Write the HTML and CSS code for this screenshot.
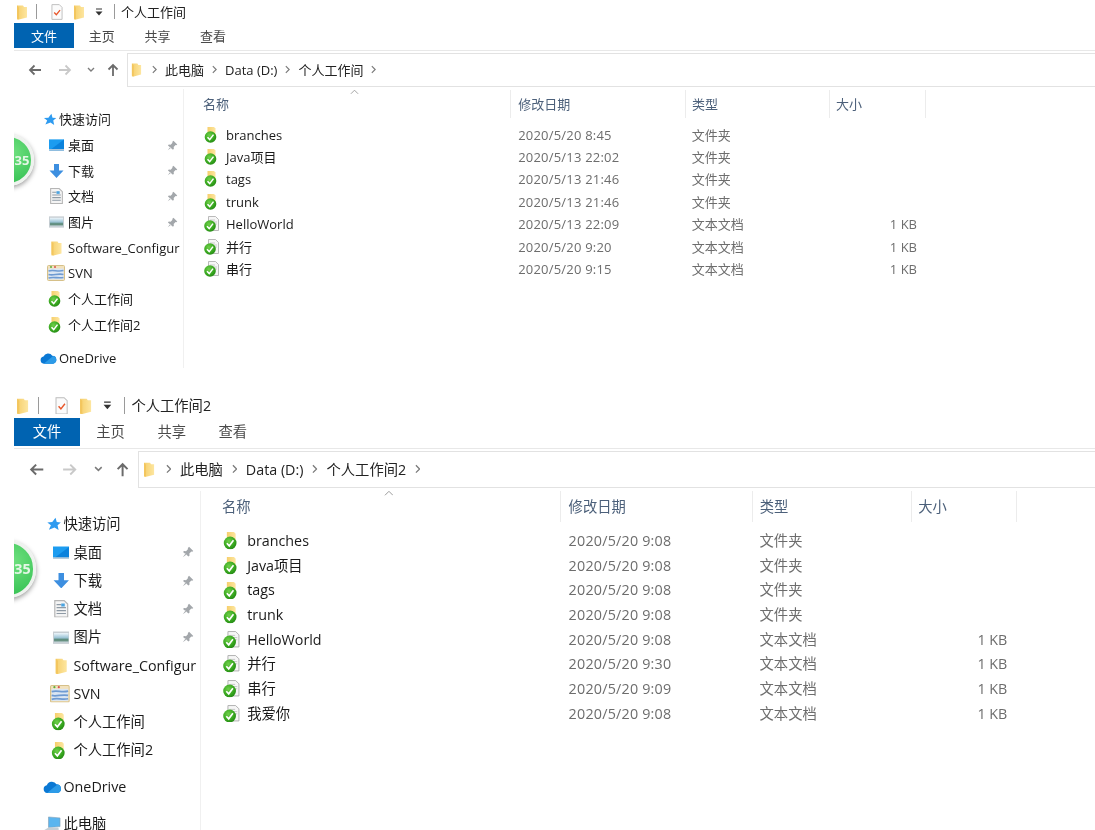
FILE: index.html
```html
<!DOCTYPE html>
<html lang="zh-CN">
<head>
<meta charset="utf-8">
<title>个人工作间</title>
<link rel="stylesheet" href="styles.css">
</head>
<body>
<svg class="defs" aria-hidden="true">
  <defs>
    <linearGradient id="gFolder" x1="0" y1="0" x2="1" y2="0"><stop offset="0" stop-color="#f6cf6c"/><stop offset="1" stop-color="#fde6a0"/></linearGradient>
    <radialGradient id="gCheck" cx=".4" cy=".35" r=".8"><stop offset="0" stop-color="#6fd04a"/><stop offset=".6" stop-color="#34a31c"/><stop offset="1" stop-color="#1d7a12"/></radialGradient>
    <linearGradient id="gSky" x1="0" y1="0" x2="0" y2="1"><stop offset="0" stop-color="#eef6fb"/><stop offset=".5" stop-color="#9cc4d6"/><stop offset=".75" stop-color="#4d7f68"/><stop offset="1" stop-color="#c8d6dd"/></linearGradient>
    <symbol id="folder" viewBox="0 0 12 16"><path d="M1 1.500h6l1 1.500h3v10.500L3 15.500H1z" fill="url(#gFolder)"/><path d="M3 3.500v12L1 14.500V1.500z" fill="#f3c65e"/></symbol>
    <symbol id="taskdoc" viewBox="0 0 13 17"><path d="M1 .5h8l3 3v13H1z" fill="#fbfbfb" stroke="#bdbdbd"/><path d="M3.500 9l2.300 2.500 4-5" fill="none" stroke="#e8562a" stroke-width="1.400"/></symbol>
    <symbol id="file-folder" viewBox="0 0 16 16"><path d="M3.500 0h6.500l1.500 1.500v11h-8z" fill="url(#gFolder)"/><circle cx="6.500" cy="10" r="5.800" fill="url(#gCheck)"/><path d="M3.500 10.200l2.200 2.400 3.800-5" fill="none" stroke="#fff" stroke-width="1.500"/></symbol>
    <symbol id="file-doc" viewBox="0 0 16 16"><path d="M4.500.5h7l3 3v11h-10z" fill="#f6f6f6" stroke="#a9a9a9" stroke-width=".8"/><path d="M6 4h5M7 6h6M11 8h2" stroke="#c2c2c2" stroke-width=".8"/><circle cx="6" cy="10" r="5.800" fill="url(#gCheck)"/><path d="M3 10.200l2.200 2.400 3.800-5" fill="none" stroke="#fff" stroke-width="1.500"/></symbol>
    <symbol id="star" viewBox="0 0 14 14"><path d="M8.500.8l1.200 4.200 4 .3-3.200 2.800 1 4.700-4-2.500L2 12.500l2-4.500L.5 5.300l4.800-.3z" fill="#2e9bf0"/></symbol>
    <symbol id="desktop" viewBox="0 0 16 12"><rect x="0" y="0" width="16" height="12" fill="#1c9cf0"/><path d="M0 12L16 0v12z" fill="#0b82dc"/><rect y="10.500" width="16" height="1.500" fill="#d0d7dd"/></symbol>
    <symbol id="download" viewBox="0 0 14 14"><path d="M4.500 0h5v6.500H14L7 14 0 6.500h4.500z" fill="#3d8fe0"/></symbol>
    <symbol id="doc" viewBox="0 0 12 15"><path d="M.5.500h8l3 3v11H.5z" fill="#f4f4f4" stroke="#b5b5b5"/><path d="M2 4h4M2 6.500h8M2 9h8M2 11.500h8" stroke="#8e9aa5"/><path d="M6 3h3v2.500H6z" fill="#4aa3e0"/></symbol>
    <symbol id="picture" viewBox="0 0 16 12"><rect width="16" height="12" fill="#c7ced3"/><rect x="1" y="1.500" width="14" height="9" fill="url(#gSky)"/></symbol>
    <symbol id="repo" viewBox="0 0 18 16"><rect x=".5" y=".5" width="17" height="15" rx="1" fill="#f2e2bd" stroke="#d6c089"/><rect x="1.500" y="3.500" width="15" height="11" fill="#dbe6f3"/><path d="M1.500 6c5-1.500 9 1 15-.5M1.500 9.500c5 1.500 9-1.500 15 0M1.500 13c5-1.500 9 .5 15-.5" fill="none" stroke="#6f9bd2" stroke-width="1.600"/><circle cx="4" cy="2" r="1" fill="#5cae3f"/><circle cx="8" cy="2" r="1" fill="#d9534f"/></symbol>
    <symbol id="cloud" viewBox="0 0 18 12"><path d="M4 12a3.800 3.800 0 0 1-.3-7.500A5.200 5.200 0 0 1 13 3.700a4.200 4.200 0 0 1 1 8.300z" fill="#0a78d4"/><path d="M4 12l6-5 4-3.200a4.200 4.200 0 0 1 0 8.200z" fill="#2c9be8"/></symbol>
    <symbol id="pc" viewBox="0 0 18 16"><path d="M5 1l12 1v9l-12 1z" fill="#5bb5ef" stroke="#7f9db3" stroke-width=".6"/><path d="M0 15l5-3h10l1 2-6 2H2z" fill="#c5ced5"/></symbol>
    <symbol id="pin" viewBox="0 0 12 12"><path d="M7 .8l4.200 4.200-1 .8-.9-.3-2 2 .2 2-1 1L1 5.900l1-1 2 .2 2-2-.3-.9zM3.500 7.500L.8 11.200l3.700-2.700z" fill="#a3a7ab"/></symbol>
    <symbol id="arrow-left" viewBox="0 0 14 12"><path d="M13 6H2M6.500 1.500L2 6l4.500 4.500" fill="none" stroke="currentColor" stroke-width="1.800"/></symbol>
    <symbol id="arrow-right" viewBox="0 0 14 12"><path d="M1 6h11M7.500 1.500L12 6l-4.500 4.500" fill="none" stroke="currentColor" stroke-width="1.800"/></symbol>
    <symbol id="arrow-up" viewBox="0 0 12 14"><path d="M6 13V2M1.500 6.500L6 2l4.500 4.500" fill="none" stroke="currentColor" stroke-width="1.800"/></symbol>
    <symbol id="chev-down" viewBox="0 0 8 6"><path d="M1 1l3 3 3-3" fill="none" stroke="currentColor" stroke-width="1.400"/></symbol>
    <symbol id="chev-right" viewBox="0 0 6 10"><path d="M1 1l4 4-4 4" fill="none" stroke="currentColor" stroke-width="1.400"/></symbol>
    <symbol id="chev-up" viewBox="0 0 10 6"><path d="M1 5l4-4 4 4" fill="none" stroke="currentColor" stroke-width="1"/></symbol>
    <symbol id="qa-more" viewBox="0 0 8 8"><path d="M1 1h6" stroke="#333" stroke-width="1"/><path d="M.5 3.500h7L4 7.500z" fill="#333"/></symbol>
  </defs>
</svg>

<section class="window window-first">
  <div class="badge"><span class="badge-text">35</span></div>
  <header class="titlebar">
    <svg class="q-folder q-first"><use href="#folder"/></svg><i class="q-sep q-sep-a"></i>
    <svg class="q-doc"><use href="#taskdoc"/></svg>
    <svg class="q-folder q-second"><use href="#folder"/></svg>
    <svg class="q-more"><use href="#qa-more"/></svg><i class="q-sep q-sep-b"></i>
    <span class="title">个人工作间</span>
  </header>
  <nav class="tabs"><span class="tab tab-file">文件</span><span class="tab">主页</span><span class="tab">共享</span><span class="tab">查看</span></nav>
  <div class="addressbar">
    <svg class="b-back"><use href="#arrow-left"/></svg>
    <svg class="b-fwd"><use href="#arrow-right"/></svg>
    <svg class="b-down"><use href="#chev-down"/></svg>
    <svg class="b-up"><use href="#arrow-up"/></svg>
    <div class="address">
      <svg class="a-folder"><use href="#folder"/></svg>
      <svg class="a-chev"><use href="#chev-right"/></svg><span>此电脑</span>
      <svg class="a-chev"><use href="#chev-right"/></svg><span>Data (D:)</span>
      <svg class="a-chev"><use href="#chev-right"/></svg><span>个人工作间</span>
      <svg class="a-chev"><use href="#chev-right"/></svg>
    </div>
  </div>
  <div class="content">
    <aside class="sidebar">
      <div class="s-row s-top"><svg class="s-star"><use href="#star"/></svg><span>快速访问</span></div>
      <div class="s-row"><svg class="s-ic"><use href="#desktop"/></svg><span>桌面</span><svg class="pin"><use href="#pin"/></svg></div>
      <div class="s-row"><svg class="s-ic"><use href="#download"/></svg><span>下载</span><svg class="pin"><use href="#pin"/></svg></div>
      <div class="s-row"><svg class="s-ic s-tall"><use href="#doc"/></svg><span>文档</span><svg class="pin"><use href="#pin"/></svg></div>
      <div class="s-row"><svg class="s-ic"><use href="#picture"/></svg><span>图片</span><svg class="pin"><use href="#pin"/></svg></div>
      <div class="s-row"><svg class="s-ic s-tall"><use href="#folder"/></svg><span>Software_Configur</span></div>
      <div class="s-row"><svg class="s-ic s-wide"><use href="#repo"/></svg><span>SVN</span></div>
      <div class="s-row"><svg class="s-ic s-wide"><use href="#file-folder"/></svg><span>个人工作间</span></div>
      <div class="s-row"><svg class="s-ic s-wide"><use href="#file-folder"/></svg><span>个人工作间2</span></div>
      <div class="s-row s-top s-group"><svg class="s-cloud"><use href="#cloud"/></svg><span>OneDrive</span></div>
    </aside>
    <main class="files">
      <div class="cols head">
        <div class="h-name">名称<svg class="sort"><use href="#chev-up"/></svg></div><div>修改日期</div><div>类型</div><div>大小</div>
      </div>
      <div class="list">
        <div class="cols row"><div class="f-name"><svg class="f-ic"><use href="#file-folder"/></svg>branches</div><div>2020/5/20 8:45</div><div>文件夹</div><div class="f-size"></div></div>
        <div class="cols row"><div class="f-name"><svg class="f-ic"><use href="#file-folder"/></svg>Java项目</div><div>2020/5/13 22:02</div><div>文件夹</div><div class="f-size"></div></div>
        <div class="cols row"><div class="f-name"><svg class="f-ic"><use href="#file-folder"/></svg>tags</div><div>2020/5/13 21:46</div><div>文件夹</div><div class="f-size"></div></div>
        <div class="cols row"><div class="f-name"><svg class="f-ic"><use href="#file-folder"/></svg>trunk</div><div>2020/5/13 21:46</div><div>文件夹</div><div class="f-size"></div></div>
        <div class="cols row"><div class="f-name"><svg class="f-ic"><use href="#file-doc"/></svg>HelloWorld</div><div>2020/5/13 22:09</div><div>文本文档</div><div class="f-size">1 KB</div></div>
        <div class="cols row"><div class="f-name"><svg class="f-ic"><use href="#file-doc"/></svg>并行</div><div>2020/5/20 9:20</div><div>文本文档</div><div class="f-size">1 KB</div></div>
        <div class="cols row"><div class="f-name"><svg class="f-ic"><use href="#file-doc"/></svg>串行</div><div>2020/5/20 9:15</div><div>文本文档</div><div class="f-size">1 KB</div></div>
      </div>
    </main>
  </div>
</section>

<section class="window window-second">
  <div class="badge"><span class="badge-text">35</span></div>
  <header class="titlebar">
    <svg class="q-folder q-first"><use href="#folder"/></svg><i class="q-sep q-sep-a"></i>
    <svg class="q-doc"><use href="#taskdoc"/></svg>
    <svg class="q-folder q-second"><use href="#folder"/></svg>
    <svg class="q-more"><use href="#qa-more"/></svg><i class="q-sep q-sep-b"></i>
    <span class="title">个人工作间2</span>
  </header>
  <nav class="tabs"><span class="tab tab-file">文件</span><span class="tab">主页</span><span class="tab">共享</span><span class="tab">查看</span></nav>
  <div class="addressbar">
    <svg class="b-back"><use href="#arrow-left"/></svg>
    <svg class="b-fwd"><use href="#arrow-right"/></svg>
    <svg class="b-down"><use href="#chev-down"/></svg>
    <svg class="b-up"><use href="#arrow-up"/></svg>
    <div class="address">
      <svg class="a-folder"><use href="#folder"/></svg>
      <svg class="a-chev"><use href="#chev-right"/></svg><span>此电脑</span>
      <svg class="a-chev"><use href="#chev-right"/></svg><span>Data (D:)</span>
      <svg class="a-chev"><use href="#chev-right"/></svg><span>个人工作间2</span>
      <svg class="a-chev"><use href="#chev-right"/></svg>
    </div>
  </div>
  <div class="content">
    <aside class="sidebar">
      <div class="s-row s-top"><svg class="s-star"><use href="#star"/></svg><span>快速访问</span></div>
      <div class="s-row"><svg class="s-ic"><use href="#desktop"/></svg><span>桌面</span><svg class="pin"><use href="#pin"/></svg></div>
      <div class="s-row"><svg class="s-ic"><use href="#download"/></svg><span>下载</span><svg class="pin"><use href="#pin"/></svg></div>
      <div class="s-row"><svg class="s-ic s-tall"><use href="#doc"/></svg><span>文档</span><svg class="pin"><use href="#pin"/></svg></div>
      <div class="s-row"><svg class="s-ic"><use href="#picture"/></svg><span>图片</span><svg class="pin"><use href="#pin"/></svg></div>
      <div class="s-row"><svg class="s-ic s-tall"><use href="#folder"/></svg><span>Software_Configur</span></div>
      <div class="s-row"><svg class="s-ic s-wide"><use href="#repo"/></svg><span>SVN</span></div>
      <div class="s-row"><svg class="s-ic s-wide"><use href="#file-folder"/></svg><span>个人工作间</span></div>
      <div class="s-row"><svg class="s-ic s-wide"><use href="#file-folder"/></svg><span>个人工作间2</span></div>
      <div class="s-row s-top s-group"><svg class="s-cloud"><use href="#cloud"/></svg><span>OneDrive</span></div>
      <div class="s-row s-top s-group"><svg class="s-cloud"><use href="#pc"/></svg><span>此电脑</span></div>
    </aside>
    <main class="files">
      <div class="cols head">
        <div class="h-name">名称<svg class="sort"><use href="#chev-up"/></svg></div><div>修改日期</div><div>类型</div><div>大小</div>
      </div>
      <div class="list">
        <div class="cols row"><div class="f-name"><svg class="f-ic"><use href="#file-folder"/></svg>branches</div><div>2020/5/20 9:08</div><div>文件夹</div><div class="f-size"></div></div>
        <div class="cols row"><div class="f-name"><svg class="f-ic"><use href="#file-folder"/></svg>Java项目</div><div>2020/5/20 9:08</div><div>文件夹</div><div class="f-size"></div></div>
        <div class="cols row"><div class="f-name"><svg class="f-ic"><use href="#file-folder"/></svg>tags</div><div>2020/5/20 9:08</div><div>文件夹</div><div class="f-size"></div></div>
        <div class="cols row"><div class="f-name"><svg class="f-ic"><use href="#file-folder"/></svg>trunk</div><div>2020/5/20 9:08</div><div>文件夹</div><div class="f-size"></div></div>
        <div class="cols row"><div class="f-name"><svg class="f-ic"><use href="#file-doc"/></svg>HelloWorld</div><div>2020/5/20 9:08</div><div>文本文档</div><div class="f-size">1 KB</div></div>
        <div class="cols row"><div class="f-name"><svg class="f-ic"><use href="#file-doc"/></svg>并行</div><div>2020/5/20 9:30</div><div>文本文档</div><div class="f-size">1 KB</div></div>
        <div class="cols row"><div class="f-name"><svg class="f-ic"><use href="#file-doc"/></svg>串行</div><div>2020/5/20 9:09</div><div>文本文档</div><div class="f-size">1 KB</div></div>
        <div class="cols row"><div class="f-name"><svg class="f-ic"><use href="#file-doc"/></svg>我爱你</div><div>2020/5/20 9:08</div><div>文本文档</div><div class="f-size">1 KB</div></div>
      </div>
    </main>
  </div>
</section>
</body>
</html>
```
FILE: styles.css
```css
* { box-sizing: border-box; }
html, body { height: 100%; }
body {
  margin: 0;
  height: 830px;
  display: flex;
  flex-direction: column;
  overflow: hidden;
  background: #fff;
  color: #1a1a1a;
  font-family: "Open Sans", "Noto Sans CJK SC", sans-serif;
}
svg { display: block; flex: none; }
.defs { position: absolute; width: 0; height: 0; }

.window {
  position: relative;
  margin-left: 14px;
  overflow: hidden;
  font-size: calc(13 * var(--u));
  line-height: calc(18 * var(--u));
  filter: blur(0.35px);
}
.window-first { --u: 1px; height: 368px; margin-bottom: 25px; flex: none; }
.window-second { --u: 1.1px; flex: 1; min-height: 0; }

.badge {
  position: absolute;
  left: calc(-32 * var(--u));
  top: calc(134 * var(--u));
  width: calc(52 * var(--u));
  height: calc(52 * var(--u));
  border-radius: 50%;
  border: calc(3 * var(--u)) solid #eef2ee;
  background: radial-gradient(circle at 60% 35%, #6fe07f, #3cc558 70%);
  box-shadow: 0 calc(2 * var(--u)) calc(5 * var(--u)) rgba(0, 0, 0, .4);
  z-index: 2;
}
.badge-text {
  position: absolute;
  left: calc(29.5 * var(--u));
  top: calc(14 * var(--u));
  color: #e4f7e6;
  font-weight: 700;
  font-size: calc(13 * var(--u));
}

.titlebar {
  height: calc(23 * var(--u));
  display: flex;
  align-items: center;
}
.q-folder { width: calc(12 * var(--u)); height: calc(16 * var(--u)); }
.q-first { margin-left: calc(2 * var(--u)); }
.q-sep { width: 1px; height: calc(15 * var(--u)); background: #9a9a9a; }
.q-sep-a { margin-left: calc(8 * var(--u)); }
.q-doc { width: calc(12 * var(--u)); height: calc(16 * var(--u)); margin-left: calc(14 * var(--u)); }
.q-second { margin-left: calc(10 * var(--u)); }
.q-more { width: calc(8 * var(--u)); height: calc(8 * var(--u)); margin-left: calc(10 * var(--u)); }
.q-sep-b { margin-left: calc(11 * var(--u)); }
.title { margin-left: calc(6 * var(--u)); color: #222; }

.tabs {
  height: calc(28 * var(--u));
  display: flex;
  align-items: flex-start;
  border-bottom: 1px solid #e8e8e8;
}
.tab {
  height: calc(25 * var(--u));
  padding: 0 calc(14.8 * var(--u));
  display: flex;
  align-items: center;
  color: #4a4a4a;
}
.tab-file {
  width: calc(60 * var(--u));
  padding: 0;
  justify-content: center;
  background: #0063b1;
  color: #fff;
}

.addressbar {
  margin-top: calc(1.5 * var(--u));
  height: calc(34 * var(--u));
  display: flex;
  align-items: center;
}
.b-back, .b-fwd { width: calc(14 * var(--u)); height: calc(12 * var(--u)); }
.b-back { margin-left: calc(14 * var(--u)); color: #6b6b6b; }
.b-fwd { margin-left: calc(16 * var(--u)); color: #c9c9c9; }
.b-down { width: calc(8 * var(--u)); height: calc(6 * var(--u)); margin-left: calc(15 * var(--u)); color: #7c7c7c; }
.b-up { width: calc(12 * var(--u)); height: calc(14 * var(--u)); margin-left: calc(12 * var(--u)); color: #6b6b6b; }
.address {
  margin-left: calc(8 * var(--u));
  flex: 1;
  height: 100%;
  display: flex;
  align-items: center;
  gap: calc(7 * var(--u));
  border: 1px solid #e2e2e2;
  border-right: 0;
  padding-left: calc(3 * var(--u));
  color: #222;
  white-space: nowrap;
}
.a-folder { width: calc(11 * var(--u)); height: calc(15 * var(--u)); margin-right: calc(2 * var(--u)); }
.a-chev { width: calc(5 * var(--u)); height: calc(9 * var(--u)); color: #7a7a7a; margin-left: calc(1 * var(--u)); margin-right: calc(1 * var(--u)); }

.content {
  margin-top: calc(2.5 * var(--u));
  display: flex;
  height: calc(281 * var(--u));
}
.window-second .content { height: 400px; }
.sidebar {
  width: calc(170 * var(--u));
  flex: none;
  padding-top: calc(17.5 * var(--u));
  border-right: 1px solid #f0f0f0;
  overflow: hidden;
}
.s-row {
  height: calc(25.7 * var(--u));
  display: flex;
  align-items: center;
  padding-left: calc(35 * var(--u));
  white-space: nowrap;
  position: relative;
}
.s-row span { margin-left: calc(4 * var(--u)); }
.s-top { padding-left: calc(26 * var(--u)); }
.s-top span { margin-left: calc(2 * var(--u)); }
.s-group { margin-top: calc(7.5 * var(--u)); }
.s-star { width: calc(17 * var(--u)); height: calc(13 * var(--u)); padding-left: calc(3 * var(--u)); }
.s-cloud { width: calc(17 * var(--u)); height: calc(14 * var(--u)); }
.s-ic { width: calc(15 * var(--u)); height: calc(14 * var(--u)); }
.s-tall { height: calc(16 * var(--u)); }
.s-wide { width: calc(18 * var(--u)); height: calc(16 * var(--u)); margin-left: calc(-2 * var(--u)); margin-right: calc(-1 * var(--u)); }
.pin {
  position: absolute;
  right: calc(5 * var(--u));
  width: calc(11 * var(--u));
  height: calc(11 * var(--u));
}

.files { flex: 1; min-width: 0; }
.cols {
  display: grid;
  grid-template-columns: calc(327 * var(--u)) calc(175 * var(--u)) calc(144 * var(--u)) calc(96 * var(--u));
}
.head { margin-top: calc(0.5 * var(--u)); height: calc(28 * var(--u)); color: #4c607a; }
.head > div {
  position: relative;
  display: flex;
  align-items: center;
  padding-left: calc(6 * var(--u));
  border-right: 1px solid #ececec;
}
.head > div:nth-child(2) { padding-left: calc(7.2 * var(--u)); }
.head .h-name { padding-left: calc(19 * var(--u)); }
.sort {
  position: absolute;
  left: calc(166 * var(--u));
  top: calc(-1 * var(--u));
  width: calc(9 * var(--u));
  height: calc(6 * var(--u));
  color: #9a9a9a;
}
.list { margin-top: calc(6 * var(--u)); }
.row { height: calc(22.4 * var(--u)); align-items: center; color: #6d6d6d; }
.row > div { padding-left: calc(5.8 * var(--u)); }
.row > div:nth-child(2) { padding-left: calc(7.2 * var(--u)); letter-spacing: calc(0.2 * var(--u)); }
.row .f-name {
  display: flex;
  align-items: center;
  padding-left: calc(20 * var(--u));
  gap: calc(6 * var(--u));
  color: #1a1a1a;
}
.f-ic { width: calc(16 * var(--u)); height: calc(16 * var(--u)); }
.row .f-size { text-align: right; padding-right: calc(9 * var(--u)); }
```
